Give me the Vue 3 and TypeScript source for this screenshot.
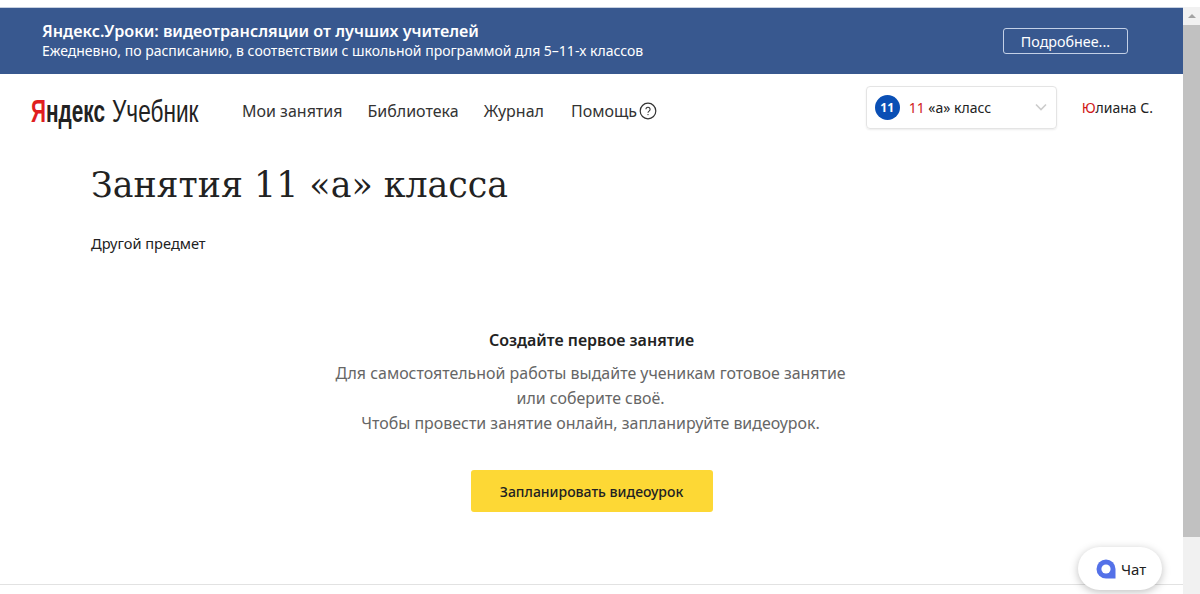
<template>
  <div class="page">
    <div class="main">
      <div class="promo">
        <div class="promo-text">
          <div class="promo-title">Яндекс.Уроки: видеотрансляции от лучших учителей</div>
          <div class="promo-sub">Ежедневно, по расписанию, в соответствии с школьной программой для 5–11-х классов</div>
        </div>
        <button class="promo-btn">Подробнее...</button>
      </div>

      <header class="head">
        <div class="logo">
          <span class="logo-ya"><i>Я</i>ндекс</span>
          <span class="logo-name">Учебник</span>
        </div>
        <nav class="nav">
          <a v-for="item in navItems" :key="item">{{ item }}</a>
          <a class="help">
            Помощь
            <svg width="18" height="18" viewBox="0 0 18 18">
              <circle cx="9" cy="9" r="7.8" fill="none" stroke="#333" stroke-width="1.2" />
              <path d="M6.9 7.3a2.1 2.1 0 1 1 3.2 1.8c-.8.5-1.1.8-1.1 1.6" fill="none" stroke="#333" stroke-width="1.1" />
              <circle cx="9" cy="12.6" r=".7" fill="#333" />
            </svg>
          </a>
        </nav>
        <div class="class-select">
          <span class="badge">11</span>
          <span class="class-name"><em>11</em> «а» класс</span>
          <svg class="chev" width="12" height="8" viewBox="0 0 12 8">
            <path d="M1 1.5l5 5 5-5" fill="none" stroke="#ccc" stroke-width="1.6" />
          </svg>
        </div>
        <div class="user"><em>Ю</em>лиана С.</div>
      </header>

      <section class="content">
        <h1>Занятия 11 «а» класса</h1>
        <div class="other">Другой предмет</div>
        <div class="empty">
          <h2>Создайте первое занятие</h2>
          <p v-for="line in emptyLines" :key="line">{{ line }}</p>
          <button class="plan">Запланировать видеоурок</button>
        </div>
      </section>

      <button class="chat">
        <svg width="20" height="20" viewBox="0 0 20 20">
          <path d="M10 .5a9.5 9.5 0 1 0 0 19h9.5V10A9.5 9.5 0 0 0 10 .5z" fill="#5471e8" />
          <circle cx="10" cy="10" r="4.6" fill="#fff" />
        </svg>
        Чат
      </button>
    </div>

    <div class="scrollbar">
      <div class="arrow"></div>
      <div class="thumb"></div>
    </div>
  </div>
</template>

<script setup lang="ts">
const navItems: string[] = ["Мои занятия", "Библиотека", "Журнал"];
const emptyLines: string[] = [
  "Для самостоятельной работы выдайте ученикам готовое занятие",
  "или соберите своё.",
  "Чтобы провести занятие онлайн, запланируйте видеоурок.",
];
</script>

<style>
html,
body {
  margin: 0;
  overflow: hidden;
  background: #fff;
}
</style>

<style scoped>
.page {
  display: flex;
  height: 594px;
  overflow: hidden;
  font-family: "Noto Sans", "Open Sans", sans-serif;
  color: #222;
  background: #fff;
}

.main {
  position: relative;
  flex: 1;
  display: flex;
  flex-direction: column;
  border-top: 7px solid #fff;
  min-width: 0;
}

.promo {
  height: 67px;
  box-sizing: border-box;
  padding: 13px 55px 0 42px;
  display: flex;
  justify-content: space-between;
  background: #38588f;
  color: #fff;
  border-top: 1px solid #c6d0e0;
}

.promo-title {
  font-size: 16.2px;
  font-weight: 600;
  line-height: 20px;
}

.promo-sub {
  font-size: 14px;
  line-height: 20px;
}

.promo-btn {
  width: 125px;
  height: 26px;
  margin-top: 7px;
  padding: 0;
  font: inherit;
  font-size: 14.3px;
  color: #fff;
  background: transparent;
  border: 1px solid #c3d0e6;
  border-radius: 3px;
}

.head {
  height: 74px;
  display: flex;
  align-items: center;
  padding: 0 30px 0 31px;
}

.logo {
  width: 211px;
  display: flex;
  align-items: baseline;
  white-space: nowrap;
  font-family: "Liberation Sans", sans-serif;
  color: #222;
}

.logo-ya {
  display: inline-block;
  width: 79px;
  font-size: 32px;
  font-weight: 700;
  transform: scaleX(0.65);
  transform-origin: left;
  margin-right: 2px;
}

.logo-ya i {
  font-style: normal;
  color: #e01e1e;
}

.logo-name {
  display: inline-block;
  font-size: 32px;
  transform: scaleX(0.707);
  transform-origin: left;
}

.nav {
  display: flex;
  align-items: center;
  gap: 25px;
  font-size: 16px;
  flex: 1;
  color: #333;
}

.help {
  display: flex;
  align-items: center;
  gap: 2px;
  margin-left: 2px;
}

.class-select {
  width: 191px;
  height: 43px;
  box-sizing: border-box;
  display: flex;
  align-items: center;
  padding: 0 9px 0 8px;
  margin-top: -8px;
  border: 1px solid #e4e4e4;
  border-radius: 4px;
  box-shadow: 0 1px 2px rgba(0, 0, 0, 0.08);
  font-size: 14px;
}

.badge {
  width: 25px;
  height: 25px;
  border-radius: 50%;
  background: #0a4fb5;
  color: #fff;
  font-size: 12px;
  font-weight: 700;
  display: flex;
  align-items: center;
  justify-content: center;
}

.class-name {
  margin-left: 9px;
  flex: 1;
}

.class-name em,
.user em {
  font-style: normal;
  color: #d11a1a;
}

.user {
  margin-left: 25px;
  margin-top: -8px;
  font-size: 14px;
}

.content {
  padding: 0 91px;
}

h1 {
  margin: 14px 0 0;
  font-family: "DejaVu Serif", serif;
  font-size: 34.8px;
  font-weight: 400;
  line-height: 46px;
  color: #222;
}

.other {
  margin-top: 25px;
  font-size: 14.6px;
  line-height: 20px;
}

.empty {
  margin: 76px 0 0 -91px;
  width: 1181px;
  display: flex;
  flex-direction: column;
  align-items: center;
}

h2 {
  margin: 0 0 10px 2px;
  font-size: 16px;
  font-weight: 600;
  line-height: 22px;
}

.empty p {
  margin: 0;
  font-size: 15.95px;
  line-height: 25px;
  color: #666;
}

.plan {
  width: 242px;
  height: 42px;
  margin: 34px 0 0 2px;
  padding: 0;
  font: inherit;
  font-size: 14px;
  font-weight: 500;
  color: #222;
  background: #fdd835;
  border: 0;
  border-radius: 3px;
}

.chat {
  position: absolute;
  z-index: 1;
  right: 21px;
  bottom: 4px;
  width: 84px;
  height: 43px;
  display: flex;
  align-items: center;
  gap: 5px;
  padding: 0 0 0 18px;
  font: inherit;
  font-size: 15px;
  color: #222;
  background: #fff;
  border: 0;
  border-radius: 22px;
  box-shadow: 0 2px 8px rgba(0, 0, 0, 0.25);
}

.main::after {
  content: "";
  position: absolute;
  left: 0;
  right: 0;
  bottom: 9px;
  border-top: 1px solid #e2e2e2;
}

.scrollbar {
  width: 17px;
  background: #f1f1f1;
  margin-top: 7px;
}

.arrow {
  height: 18px;
  position: relative;
}

.arrow::before {
  content: "";
  position: absolute;
  left: 5px;
  top: 7px;
  border: 4px solid transparent;
  border-top: 0;
  border-bottom: 4px solid #a3a3a3;
}

.thumb {
  height: 512px;
  background: #c1c1c1;
}
</style>
